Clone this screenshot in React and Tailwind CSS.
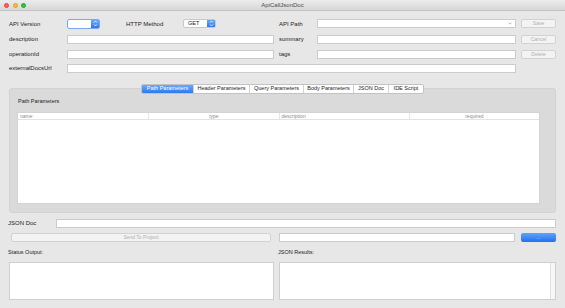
import React from 'react';

function Stepper() {
  return (
    <svg width="5" height="7" viewBox="0 0 5 7" fill="none" stroke="white" strokeWidth="0.9">
      <path d="M1 2.6 L2.5 1.1 L4 2.6" />
      <path d="M1 4.4 L2.5 5.9 L4 4.4" />
    </svg>
  );
}

function Field({ className = '' }) {
  return <div className={`h-[9px] bg-white border border-[#cbcbcb] ${className}`} />;
}

function GrayButton({ label, className = '' }) {
  return (
    <div className={`h-[9px] flex items-center justify-center rounded-[2px] bg-[#f3f3f3] border border-[#d2d2d2] text-[5px] text-[#b0b0b0] ${className}`}>
      {label}
    </div>
  );
}

const tabs = ['Path Parameters', 'Header Parameters', 'Query Parameters', 'Body Parameters', 'JSON Doc', 'IDE Script'];
const tabWidths = ['w-[51px]', 'w-[56px]', 'w-[54px]', 'w-[50px]', 'w-[35px]', 'w-[35px]'];

export default function App() {
  return (
    <div className="w-[565px] h-[308px] overflow-hidden bg-[#e7e7e7] flex flex-col text-[6px] leading-none text-[#1c1c1c] font-['Liberation_Sans',Arial,sans-serif]">
      {/* title bar */}
      <div className="h-[11px] shrink-0 flex items-center bg-gradient-to-b from-[#ececec] to-[#d7d7d7] border-b border-[#c4c4c4]">
        <div className="w-[40px] flex items-center gap-[3.5px] pl-[4px]">
          <span className="w-[5px] h-[5px] rounded-full bg-[#fc5f57] border-[0.5px] border-[#e0443e]" />
          <span className="w-[5px] h-[5px] rounded-full bg-[#fdbc2e] border-[0.5px] border-[#dea123]" />
          <span className="w-[5px] h-[5px] rounded-full bg-[#28c840] border-[0.5px] border-[#1aab29]" />
        </div>
        <div className="flex-1 text-center text-[6px] text-[#4a4a4a]">ApiCallJsonDoc</div>
        <div className="w-[40px]" />
      </div>

      <div className="pl-[9px] flex flex-col">
        {/* row 1 */}
        <div className="mt-[7px] h-[11px] flex items-center">
          <div className="w-[58px]">API Version</div>
          <div className="w-[33px] h-[10px] flex rounded-[2px] border border-[#7aa9f2] overflow-hidden bg-white">
            <div className="flex-1" />
            <div className="w-[8px] flex items-center justify-center bg-gradient-to-b from-[#68a8fb] to-[#2a77ee]">
              <Stepper />
            </div>
          </div>
          <div className="ml-[26px] w-[57px]">HTTP Method</div>
          <div className="w-[33px] h-[9px] flex rounded-[2px] border border-[#c8c8c8] overflow-hidden bg-white">
            <div className="flex-1 flex items-center pl-[4px] text-[5.5px]">GET</div>
            <div className="w-[8px] flex items-center justify-center bg-gradient-to-b from-[#68a8fb] to-[#2a77ee]">
              <Stepper />
            </div>
          </div>
          <div className="ml-[63px] w-[38px]">API Path</div>
          <div className="w-[199px] h-[9px] flex items-center justify-end pr-[3px] bg-white border border-[#cbcbcb]">
            <svg width="4" height="3" viewBox="0 0 4 3" fill="none" stroke="#9a9a9a" strokeWidth="0.7">
              <path d="M0.5 0.7 L2 2.2 L3.5 0.7" />
            </svg>
          </div>
          <GrayButton label="Save" className="ml-[5px] w-[35px]" />
        </div>

        {/* row 2 */}
        <div className="mt-[5px] h-[10px] flex items-center">
          <div className="w-[58px]">description</div>
          <Field className="w-[207px]" />
          <div className="ml-[5px] w-[38px]">summary</div>
          <Field className="w-[199px]" />
          <GrayButton label="Cancel" className="ml-[5px] w-[35px]" />
        </div>

        {/* row 3 */}
        <div className="mt-[5px] h-[10px] flex items-center">
          <div className="w-[58px]">operationId</div>
          <Field className="w-[207px]" />
          <div className="ml-[5px] w-[38px]">tags</div>
          <Field className="w-[199px]" />
          <GrayButton label="Delete" className="ml-[5px] w-[35px]" />
        </div>

        {/* row 4 */}
        <div className="mt-[4px] h-[10px] flex items-center">
          <div className="w-[58px]">externalDocsUrl</div>
          <Field className="w-[449px]" />
        </div>

        {/* tabs + group box */}
        <div className="mt-[11px] flex flex-col w-[547px]">
          <div className="relative z-10 flex justify-center">
            <div className="flex h-[10px] rounded-[2px] border border-[#c3c3c3] bg-white overflow-hidden">
              {tabs.map((t, i) => (
                <div
                  key={t}
                  className={`${tabWidths[i]} flex items-center justify-center text-[5.5px] ${
                    i === 0
                      ? 'bg-gradient-to-b from-[#6aa9fb] to-[#2b78ef] text-white'
                      : 'text-[#1c1c1c] border-l border-[#d4d4d4]'
                  }`}
                >
                  {t}
                </div>
              ))}
            </div>
          </div>
          <div className="-mt-[6px] h-[125px] rounded-[3px] bg-[#dadada] border border-[#d2d2d2] flex flex-col pt-[10px]">
            <div className="pl-[8px] h-[7px] text-[5.5px]">Path Parameters</div>
            <div className="mt-[6px] ml-[7px] mr-[15px] h-[92px] bg-white border border-[#d3d3d3] flex flex-col">
              <div className="h-[7px] grid grid-cols-4 border-b border-[#e2e2e2] text-[5px] text-[#8c8c8c]">
                <div className="flex items-center pl-[2px]">name</div>
                <div className="flex items-center justify-center border-l border-[#e6e6e6]">type</div>
                <div className="flex items-center pl-[2px] border-l border-[#e6e6e6]">description</div>
                <div className="flex items-center justify-center border-l border-[#e6e6e6]">required</div>
              </div>
            </div>
          </div>
        </div>

        {/* JSON Doc row */}
        <div className="mt-[5px] h-[10px] flex items-center">
          <div className="w-[47px] -ml-[1px]">JSON Doc</div>
          <Field className="ml-[1px] w-[500px]" />
        </div>

        {/* send row */}
        <div className="mt-[4px] h-[10px] flex items-center">
          <GrayButton label="Send To Project" className="ml-[2px] w-[260px]" />
          <Field className="ml-[8px] w-[236px]" />
          <div className="ml-[6px] w-[35px] h-[9px] flex items-center justify-center rounded-[2px] bg-gradient-to-b from-[#5fa3fb] to-[#1f6ff0] text-[5px] text-[#bcd6ff]">
            ...
          </div>
        </div>

        {/* output labels */}
        <div className="mt-[7px] h-[7px] flex items-center text-[5.5px]">
          <div className="w-[270px] -ml-[1px]">Status Output:</div>
          <div>JSON Results:</div>
        </div>

        {/* text areas */}
        <div className="mt-[6px] flex gap-[5px]">
          <div className="w-[265px] h-[38px] bg-white border border-[#cfcfcf]" />
          <div className="w-[277px] h-[38px] bg-white border border-[#cfcfcf] flex justify-end">
            <div className="w-[5px] h-full bg-[#f7f7f7] border-l border-[#e3e3e3]" />
          </div>
        </div>
      </div>
    </div>
  );
}
